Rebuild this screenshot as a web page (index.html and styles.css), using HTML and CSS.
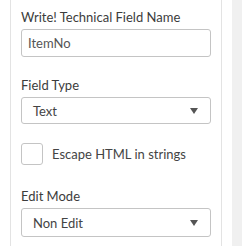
FILE: index.html
```html
<!DOCTYPE html>
<html lang="en">
<head>
  <meta charset="UTF-8">
  <title>Field Settings</title>
  <link rel="stylesheet" href="styles.css">
</head>
<body>
  <div class="layout">
    <div class="panel">
      <div class="field">
        <label class="label">Write! Technical Field Name</label>
        <input class="text-input" type="text" value="ItemNo">
      </div>
      <div class="field">
        <label class="label">Field Type</label>
        <div class="select">
          <span>Text</span>
          <span class="arrow"></span>
        </div>
      </div>
      <div class="check-row">
        <span class="checkbox"></span>
        <span class="check-label">Escape HTML in strings</span>
      </div>
      <div class="field">
        <label class="label">Edit Mode</label>
        <div class="select tall">
          <span>Non Edit</span>
          <span class="arrow"></span>
        </div>
      </div>
    </div>
    <div class="side"></div>
  </div>
</body>
</html>
```

FILE: styles.css
```css
body {
  margin:0; padding:0;
  font-family: "Lato", "Open Sans", sans-serif;
  background:#fff; color:#333;
}
.layout { display:flex; height:246px; padding-left:10px; }
.panel {
  width:190px;
  border-left:1px solid #e3e3e3; border-right:1px solid #e3e3e3;
  padding:8px 10px 0 10px;
}
.side { flex:1; margin-left:10px; background:#f0f0f0; }
.field { margin-bottom:19px; }
.label {
  display:block; font-size:13px; line-height:18px;
  color:#3c3c3c; margin-bottom:3px;
}
.text-input {
  display:block; box-sizing:border-box; width:190px; height:28px;
  border:1px solid #c4c4c4; border-radius:3px;
  padding:0 6px; font-family:inherit; font-size:13px; color:#555;
}
.select {
  box-sizing:border-box; width:190px; height:27px;
  border:1px solid #c4c4c4; border-radius:3px;
  padding:0 12px 0 11px; font-size:13px; color:#444;
  display:flex; align-items:center; justify-content:space-between;
}
.select.tall { height:29px; }
.arrow {
  width:0; height:0;
  border-left:4px solid transparent; border-right:4px solid transparent;
  border-top:6px solid #555;
}
.check-row { display:flex; align-items:center; margin:1px 0 22px; }
.checkbox {
  box-sizing:border-box; width:22px; height:22px;
  border:1px solid #c4c4c4; border-radius:3px;
}
.check-label { margin-left:9px; font-size:13px; color:#444; }
```
